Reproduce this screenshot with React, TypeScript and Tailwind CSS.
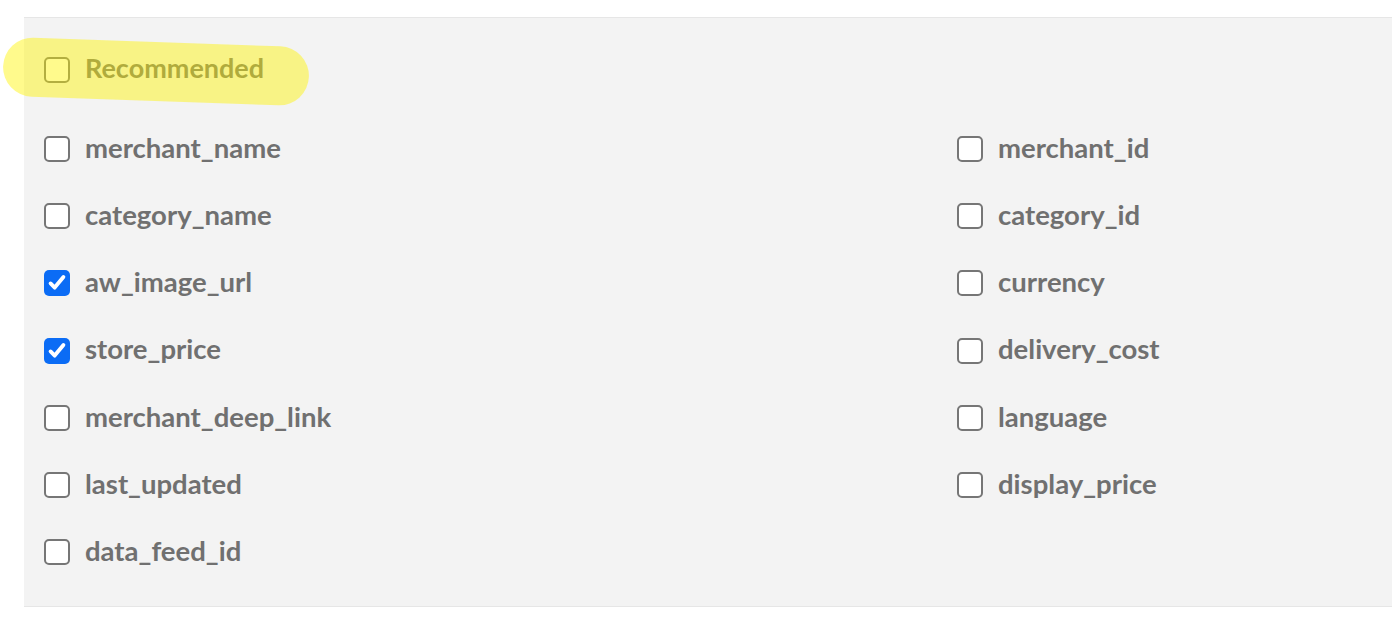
import { useState } from "react"

const left = ["merchant_name", "category_name", "aw_image_url", "store_price", "merchant_deep_link", "last_updated", "data_feed_id"]
const right = ["merchant_id", "category_id", "currency", "delivery_cost", "language", "display_price"]

function Box({ checked, onClick }: { checked: boolean; onClick: () => void }) {
  return (
    <span
      onClick={onClick}
      className={
        checked
          ? "flex h-[26px] w-[26px] shrink-0 items-center justify-center rounded-[5px] bg-[#0b6cf5]"
          : "flex h-[26px] w-[26px] shrink-0 items-center justify-center rounded-[5px] border-2 border-[#767676] bg-white"
      }
    >
      {checked && (
        <svg viewBox="0 0 24 24" className="h-[22px] w-[22px]" fill="none" stroke="white" strokeWidth={4.2} strokeLinecap="round" strokeLinejoin="round">
          <path d="M5 12.5l4.5 4.5L19 5.5" />
        </svg>
      )}
    </span>
  )
}

function Field({ name, checked, toggle }: { name: string; checked: boolean; toggle: () => void }) {
  return (
    <label className="flex h-[67.3px] items-center gap-[15px]">
      <Box checked={checked} onClick={toggle} />
      <span className="-mt-[3px] text-[27.5px] font-bold text-[#707070]">{name}</span>
    </label>
  )
}

export default function App() {
  const [checked, setChecked] = useState<Record<string, boolean>>({ aw_image_url: true, store_price: true })
  const toggle = (n: string) => setChecked((c) => ({ ...c, [n]: !c[n] }))

  return (
    <div className="relative h-[621px] w-[1392px] overflow-hidden bg-white" style={{ fontFamily: "Lato, 'Open Sans', sans-serif" }}>
      <div className="ml-[24px] mt-[17px] h-[590px] border-y border-[#e6e6e6] bg-[#f3f3f3] pl-[20px]">
        {/* Recommended */}
        <div className="mt-[32px] flex h-[40px] items-center gap-[15px]">
          <Box checked={!!checked.Recommended} onClick={() => toggle("Recommended")} />
          <span className="-mt-[3px] text-[27px] font-bold text-[#707070]">Recommended</span>
        </div>

        <div className="mt-[25px] grid grid-cols-[913px_1fr]">
          <div className="flex flex-col">
            {left.map((n) => (
              <Field key={n} name={n} checked={!!checked[n]} toggle={() => toggle(n)} />
            ))}
          </div>
          <div className="flex flex-col">
            {right.map((n) => (
              <Field key={n} name={n} checked={!!checked[n]} toggle={() => toggle(n)} />
            ))}
          </div>
        </div>
      </div>

      {/* highlighter stroke */}
      <div className="pointer-events-none absolute left-[3px] top-[42px] h-[59px] w-[306px] rotate-[2deg] rounded-full bg-[rgba(255,245,0,0.45)]" />
    </div>
  )
}
